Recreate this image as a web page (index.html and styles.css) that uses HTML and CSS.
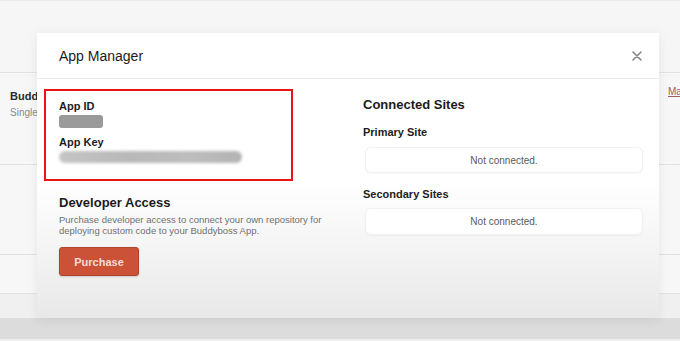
FILE: index.html
```html
<!DOCTYPE html>
<html>
<head>
<meta charset="utf-8">
<link rel="stylesheet" href="styles.css">
</head>
<body>
<div class="page">
  <div class="topbar"></div>
  <div class="row row1">
    <div class="row-text">
      <div class="row-title">Buddy</div>
      <div class="row-sub">Single</div>
    </div>
    <a class="row-link">Ma</a>
  </div>
  <div class="row row2"></div>
  <div class="row row3"></div>
  <div class="row row4"></div>
  <div class="bottom"></div>
</div>

<div class="modal">
  <div class="modal-header">
    <div class="modal-title">App Manager</div>
    <svg class="close" width="10" height="10" viewBox="0 0 10 10"><path d="M1 1 L9 9 M9 1 L1 9" stroke="#858585" stroke-width="1.6" stroke-linecap="round"/></svg>
  </div>
  <div class="modal-body">
    <div class="col-left">
      <div class="highlight">
        <div class="label">App ID</div>
        <div class="secret secret-id"></div>
        <div class="label label-key">App Key</div>
        <div class="secret secret-key"></div>
      </div>
      <div class="heading dev-heading">Developer Access</div>
      <p class="desc">Purchase developer access to connect your own repository for deploying custom code to your Buddyboss App.</p>
      <button class="btn">Purchase</button>
    </div>
    <div class="col-right">
      <div class="heading">Connected Sites</div>
      <div class="label sub-primary">Primary Site</div>
      <div class="site-box">Not connected.</div>
      <div class="label sub-secondary">Secondary Sites</div>
      <div class="site-box box-secondary">Not connected.</div>
    </div>
  </div>
</div>
</body>
</html>
```

FILE: styles.css
```css
* { box-sizing: border-box; }
html, body { margin: 0; padding: 0; }
body {
  width: 680px;
  height: 341px;
  overflow: hidden;
  font-family: "Liberation Sans", Arial, sans-serif;
  background: #f5f5f5;
  color: #1d1d1d;
}
.page {
  display: flex;
  flex-direction: column;
  height: 341px;
}
.topbar {
  height: 73px;
  background: #f6f6f6;
  border-top: 1px solid #ececec;
  border-bottom: 1px solid #e3e3e3;
}
.row {
  border-bottom: 1px solid #e3e3e3;
  background: #f7f7f7;
}
.row1 {
  height: 92px;
  display: flex;
  justify-content: space-between;
  padding: 16px 0 0 10px;
}
.row-text {
  width: 27px;
  overflow: hidden;
  white-space: nowrap;
}
.row-title {
  font-size: 11px;
  font-weight: 700;
  line-height: 14px;
  color: #2a2a2a;
}
.row-sub {
  margin-top: 3px;
  font-size: 10px;
  line-height: 14px;
  color: #8a8a8a;
}
.row-link {
  margin-top: -4px;
  width: 12px;
  overflow: hidden;
  white-space: nowrap;
  font-size: 10px;
  line-height: 14px;
  color: #a0605c;
  text-decoration: underline;
}
.row2 { height: 90px; }
.row3 { height: 39px; }
.row4 { flex: 1; border-bottom: none; background: #f0f0f0; }
.bottom {
  height: 23px;
  background: #dcdcdc;
  border-bottom: 2px solid #efefef;
}

.modal {
  position: absolute;
  left: 37px;
  top: 33px;
  width: 622px;
  height: 285px;
  background: linear-gradient(to bottom, #ffffff 0%, #ffffff 52%, #f2f2f2 80%, #e8e8e8 100%);
  box-shadow: 0 2px 10px rgba(0,0,0,0.08);
}
.modal-header {
  height: 46px;
  border-bottom: 1px solid #ebebeb;
  display: flex;
  align-items: center;
  justify-content: space-between;
  padding: 0 17px 0 22px;
}
.modal-title {
  font-size: 14px;
  font-weight: 500;
  color: #1b1b1b;
}
.close { display: block; }
.modal-body {
  display: flex;
  padding: 0 16px 0 22px;
}
.col-left {
  width: 304px;
}
.col-right {
  flex: 1;
  padding-top: 18px;
}
.highlight {
  margin-top: 10px;
  margin-left: -15px;
  width: 249px;
  border: 2px solid #e8141a;
  padding: 8px 13px 16px 13px;
}
.label {
  font-size: 11px;
  font-weight: 700;
  line-height: 14px;
  color: #1d1d1d;
}
.secret {
  margin-top: 2px;
  border-radius: 3px;
}
.secret-id {
  width: 44px;
  height: 13px;
  background: #9a9a9a;
  filter: blur(0.6px);
}
.label-key { margin-top: 7px; }
.secret-key {
  width: 183px;
  height: 12px;
  background: linear-gradient(to right, #c4c4c4, #b8b8b8 40%, #bdbdbd 70%, #b3b3b3);
  border-radius: 6px;
  filter: blur(1.5px);
}
.heading {
  font-size: 13px;
  font-weight: 700;
  line-height: 16px;
  color: #1b1b1b;
}
.dev-heading { margin-top: 14px; }
.desc {
  margin: 3px 0 0 0;
  font-size: 9.5px;
  line-height: 11px;
  color: #707070;
  width: 280px;
}
.btn {
  display: block;
  margin-top: 11px;
  width: 80px;
  height: 29px;
  border: 1px solid #b3452e;
  border-radius: 3px;
  background: #cc5237;
  color: #f7ddd3;
  font-family: "Liberation Sans", Arial, sans-serif;
  font-size: 11px;
  font-weight: 700;
  padding: 0;
  box-shadow: 0 1px 2px rgba(0,0,0,0.15);
}
.sub-primary { margin-top: 12px; }
.site-box {
  margin-top: 8px;
  margin-left: 2px;
  width: 278px;
  height: 26px;
  border: 1px solid #f1f1f1;
  border-radius: 6px;
  box-shadow: 0 1px 2px rgba(0,0,0,0.04);
  background: #ffffff;
  display: flex;
  align-items: center;
  justify-content: center;
  font-size: 10px;
  color: #5a5a5a;
}
.sub-secondary { margin-top: 14px; }
.box-secondary { margin-top: 7px; height: 27px; }
```
